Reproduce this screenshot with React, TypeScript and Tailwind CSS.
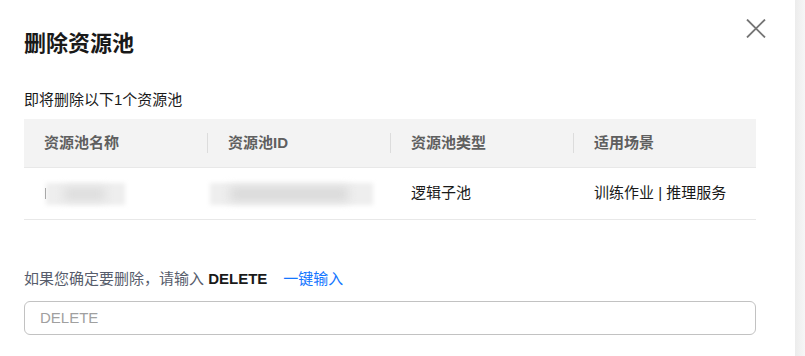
import React from "react";

const font = { fontFamily: '"Liberation Sans","Noto Sans CJK SC",sans-serif' };

function HeaderCell({ label, divider }: { label: string; divider?: boolean }) {
  return (
    <div className="flex items-center h-full">
      {divider && <span className="w-px h-5 bg-[#dcdcdc]" />}
      <span className="pl-5">{label}</span>
    </div>
  );
}

export default function App() {
  return (
    <div className="w-[805px] h-[356px] flex bg-white overflow-hidden" style={font}>
      <div className="relative w-[795px] h-full bg-white px-6 pt-[29px]">
        <button className="absolute top-[19px] right-[29px] w-[20px] h-[19px] flex items-center justify-center">
          <svg width="20" height="19" viewBox="0 0 20 19" fill="none">
            <path d="M1 0.5 L19 18.5 M19 0.5 L1 18.5" stroke="#757575" strokeWidth="1.8" />
          </svg>
        </button>
        <h1 className="text-[22px] leading-[30px] font-bold text-[#191919]">删除资源池</h1>
        <p className="mt-[30px] text-[15px] leading-[22px] text-[#191919]">即将删除以下1个资源池</p>
        <div className="mt-2 w-[732px]">
          <div className="grid grid-cols-4 h-[49px] bg-[#f3f3f3] border-b border-[#e8e8e8] text-[15px] font-semibold text-[#5f5f5f]">
            <HeaderCell label="资源池名称" />
            <HeaderCell label="资源池ID" divider />
            <HeaderCell label="资源池类型" divider />
            <HeaderCell label="适用场景" divider />
          </div>
          <div className="grid grid-cols-4 h-[52px] border-b border-[#e8e8e8] text-[15px] text-[#191919]">
            <div className="flex items-center pl-[21px]">
              <span className="w-px h-[11px] bg-[#777]" />
              <div className="relative w-[79px] h-[22px]">
                <div className="absolute inset-0 bg-[#eeeeee] blur-[2px]" />
                <div className="absolute left-[18px] right-[20px] top-[5px] bottom-[5px] bg-[#dcdcdc] blur-[5px]" />
              </div>
            </div>
            <div className="flex items-center pl-[3px]">
              <div className="relative w-[163px] h-[22px]">
                <div className="absolute inset-0 bg-[#eeeeee] blur-[2px]" />
                <div className="absolute left-[20px] right-[25px] top-[4px] bottom-[4px] bg-[#dadada] blur-[5px]" />
              </div>
            </div>
            <div className="flex items-center pl-[21px]">逻辑子池</div>
            <div className="flex items-center pl-[21px]">训练作业 | 推理服务</div>
          </div>
        </div>
        <p className="mt-[48px] text-[15px] leading-[22px] text-[#575d6c]">
          如果您确定要删除，请输入 <span className="font-bold text-[#191919]">DELETE</span>
          <a className="ml-4 text-[#1476ff] cursor-pointer">一键输入</a>
        </p>
        <div className="mt-[11px] w-[732px] h-[34px] border border-[#c2c2c2] rounded-md flex items-center px-[15px]">
          <input
            className="w-full outline-none text-[15px] text-[#191919] placeholder:text-[#a0a0a0] bg-transparent"
            placeholder="DELETE"
            style={font}
          />
        </div>
      </div>
      <div className="w-[10px] h-full bg-gradient-to-r from-[#ececec] to-[#f6f6f6]" />
    </div>
  );
}
